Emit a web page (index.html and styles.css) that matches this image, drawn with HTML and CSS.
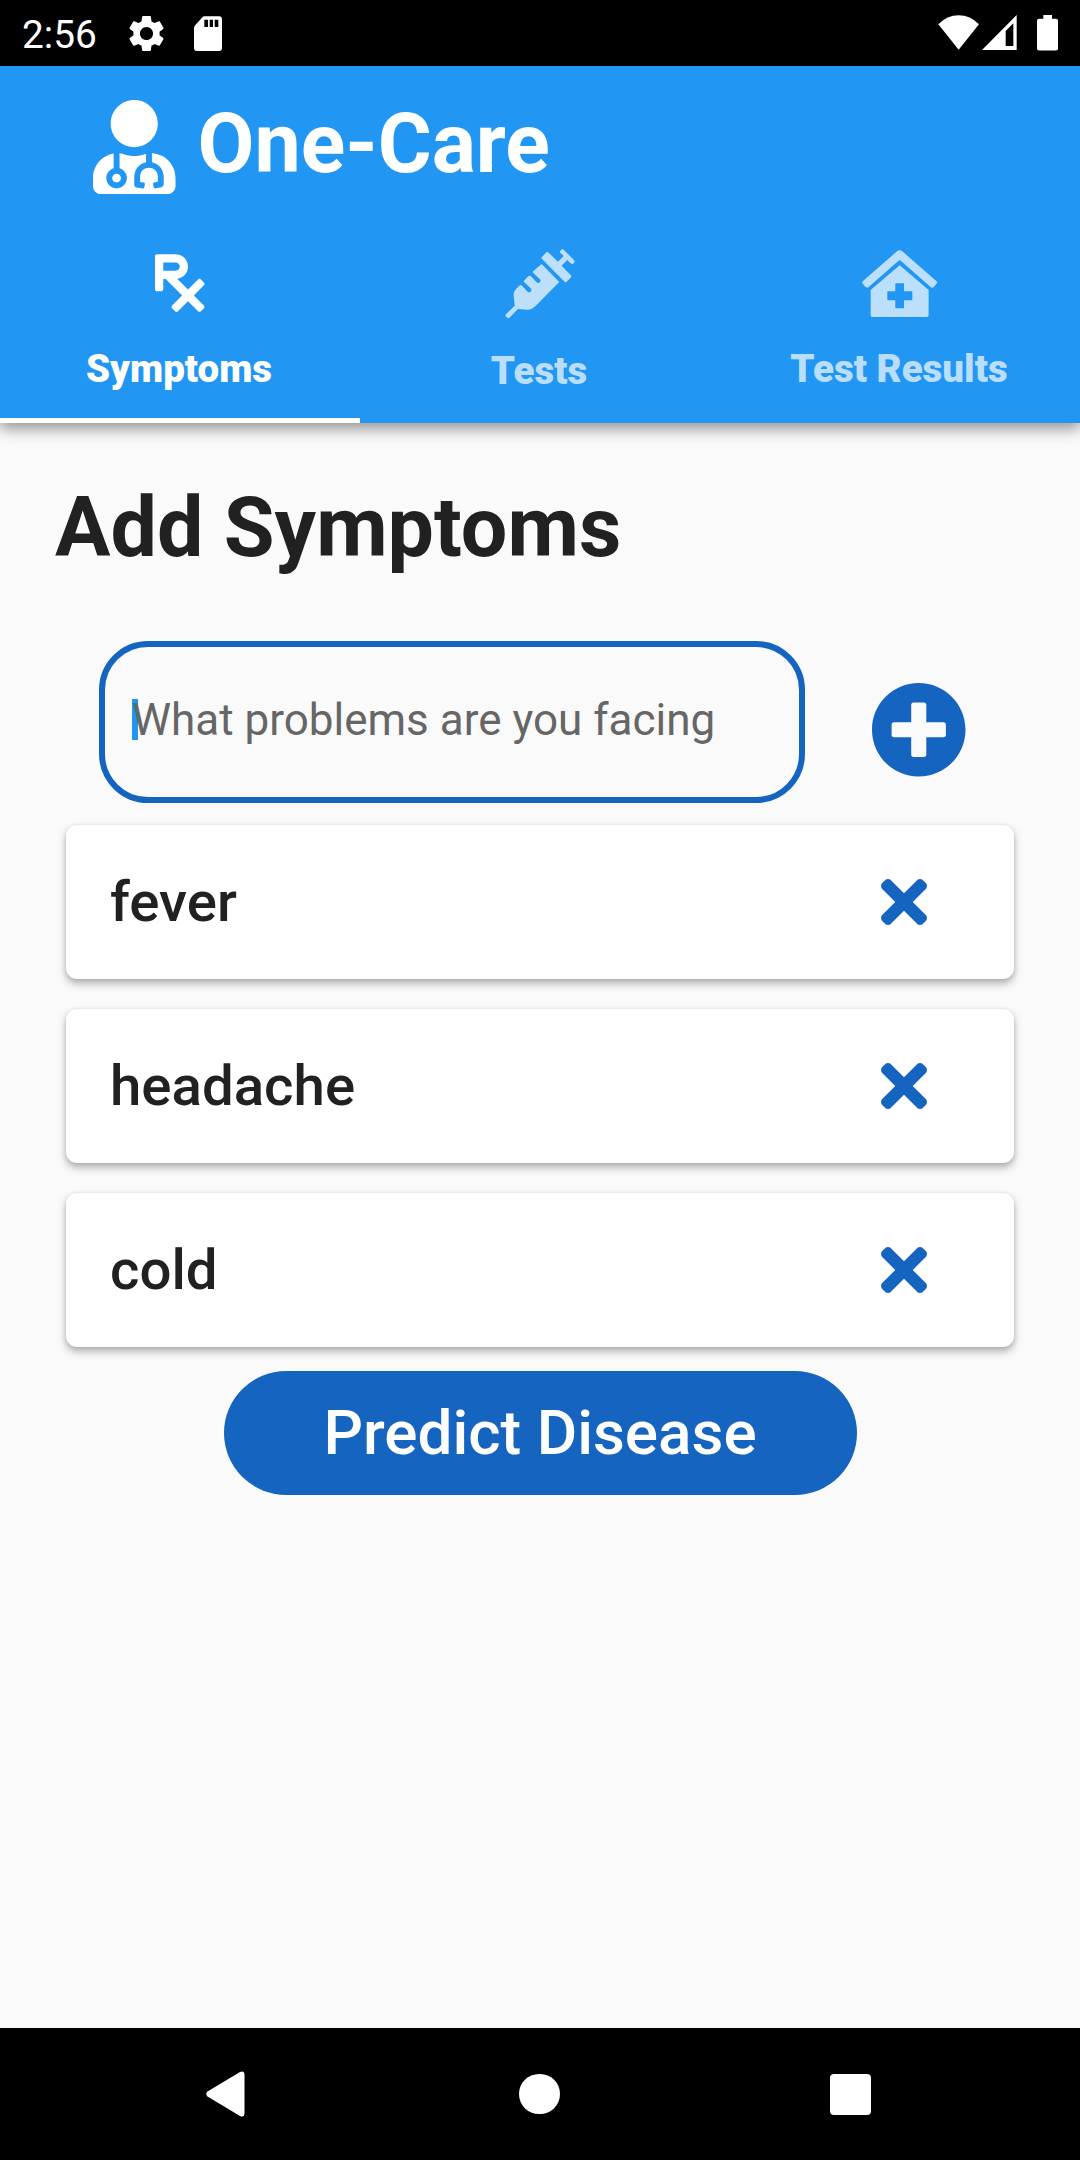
FILE: index.html
```html
<!DOCTYPE html>
<html lang="en">
<head>
<meta charset="utf-8">
<title>One-Care</title>
<link rel="stylesheet" href="styles.css">
</head>
<body>
<div class="status-bar">
  <span class="clock">2:56</span>
  <svg class="gear" viewBox="2.4 2.4 19.2 19.2"><path d="M19.14,12.94c0.04-0.3,0.06-0.61,0.06-0.94c0-0.32-0.02-0.64-0.07-0.94l2.03-1.58c0.18-0.14,0.23-0.41,0.12-0.61l-1.92-3.32c-0.12-0.22-0.37-0.29-0.59-0.22l-2.39,0.96c-0.5-0.38-1.03-0.7-1.62-0.94L14.4,2.81c-0.04-0.24-0.24-0.41-0.48-0.41h-3.84c-0.24,0-0.43,0.17-0.47,0.41L9.25,5.35C8.66,5.59,8.12,5.92,7.63,6.29L5.24,5.33c-0.22-0.08-0.47,0-0.59,0.22L2.74,8.87C2.62,9.08,2.66,9.34,2.86,9.48l2.03,1.58C4.84,11.36,4.8,11.69,4.8,12s0.02,0.64,0.07,0.94l-2.03,1.58c-0.18,0.14-0.23,0.41-0.12,0.61l1.92,3.32c0.12,0.22,0.37,0.29,0.59,0.22l2.39-0.96c0.5,0.38,1.03,0.7,1.62,0.94l0.36,2.54c0.05,0.24,0.24,0.41,0.48,0.41h3.84c0.24,0,0.44-0.17,0.47-0.41l0.36-2.54c0.59-0.24,1.13-0.56,1.62-0.94l2.39,0.96c0.22,0.08,0.47,0,0.59-0.22l1.92-3.32c0.12-0.22,0.07-0.47-0.12-0.61L19.14,12.94z M12,15.6c-1.98,0-3.6-1.62-3.6-3.6s1.62-3.6,3.6-3.6s3.6,1.62,3.6,3.6S13.98,15.6,12,15.6z"/></svg>
  <svg class="sd" viewBox="0 0 84 105"><path fill-rule="evenodd" d="M31 1H75Q84 1 84 10V96Q84 105 75 105H9Q0 105 0 96V37Q0 31 4 27L24 5Q28 1 31 1ZM31 11V33H42V11ZM47 11V33H57V11ZM62 11V33H73V11Z"/></svg>
  <svg class="wifi" viewBox="0 0 124 104"><path d="M1 28Q27 1 62 1T123 28L62 104Z"/></svg>
  <svg class="signal" viewBox="0 0 104 105"><path fill-rule="evenodd" d="M104 0V105H0ZM94 25L71 48V93H94Z"/></svg>
  <svg class="battery" viewBox="0 0 63 106"><path d="M19 0H45V11H57Q63 11 63 17V100Q63 106 57 106H6Q0 106 0 100V17Q0 11 6 11H19Z"/></svg>
</div>

<header class="app-bar">
  <div class="brand">
    <svg class="doctor" viewBox="0 0 448 512"><path d="M224 256c70.7 0 128-57.3 128-128S294.7 0 224 0 96 57.3 96 128s57.3 128 128 128zM104 424c0 13.3 10.7 24 24 24s24-10.7 24-24-10.7-24-24-24-24 10.7-24 24zm216-135.4v49c36.5 7.4 64 39.8 64 78.4v41.7c0 7.6-5.4 14.2-12.9 15.7l-32.2 6.4c-4.3.9-8.5-1.9-9.4-6.3l-3.1-15.7c-.9-4.3 1.9-8.6 6.3-9.4l19.3-3.9V416c0-62.8-96-65.1-96 1.9v26.7l19.3 3.9c4.3.9 7.1 5.1 6.3 9.4l-3.1 15.7c-.9 4.3-5.1 7.1-9.4 6.3l-31.2-4.2c-7.9-1.1-13.8-7.8-13.8-15.9V416c0-38.6 27.5-70.9 64-78.4v-45.2c-2.2.7-4.4 1.1-6.6 1.9-18 6.3-37.3 9.8-57.4 9.8s-39.4-3.5-57.4-9.8c-7.4-2.6-14.9-4.2-22.6-5.2v81.6c23.1 6.9 40 28.1 40 53.4 0 30.9-25.1 56-56 56s-56-25.1-56-56c0-25.3 16.9-46.5 40-53.4v-80.4C48.5 301 0 355.8 0 422.4v44.8C0 491.9 20.1 512 44.8 512h358.4c24.7 0 44.8-20.1 44.8-44.8v-44.8c0-72-56.8-130.3-128-133.8z"/></svg>
    <span class="brand-name">One-Care</span>
  </div>
  <nav class="tabs">
    <div class="tab tab-symptoms active">
      <svg class="tab-icon" viewBox="0 0 384 512"><path d="M301.26 352l78.06-78.06c6.25-6.25 6.25-16.38 0-22.63l-22.63-22.63c-6.25-6.25-16.38-6.25-22.63 0L256 306.74l-83.96-83.96C219.31 216.8 256 176.89 256 128c0-53.02-42.98-96-96-96H16C7.16 32 0 39.16 0 48v256c0 8.84 7.16 16 16 16h32c8.84 0 16-7.16 16-16v-80h18.75l128 128-78.06 78.06c-6.25 6.25-6.25 16.38 0 22.63l22.63 22.63c6.25 6.25 16.38 6.25 22.63 0L256 397.25l78.06 78.06c6.25 6.25 16.38 6.25 22.63 0l22.63-22.63c6.25-6.25 6.25-16.38 0-22.63L301.26 352zM64 96h96c17.64 0 32 14.36 32 32s-14.36 32-32 32H64V96z"/></svg>
      <span>Symptoms</span>
    </div>
    <div class="tab tab-tests">
      <svg class="tab-icon" viewBox="130 80 220 220"><path d="M246 131L299 185L227 258Q216 269 203 268L175 266L149 292Q146 295 143 292L138 288Q136 285 139 282L165 256L162 226Q161 214 169 206L179 196Q183 192 187 196L204 214Q208 218 213 214Q217 209 213 204L194 186Q191 183 194 180L206 168Q210 164 214 168L231 186Q236 190 241 186Q244 181 241 177L221 158Q218 155 221 152Z"/><path d="M260 96Q263 93 267 97L295 124L312 107L302 97Q299 94 302 91L305 88Q308 84 312 88L343 119Q347 123 343 127L340 130Q337 133 333 129L323 119L306 136L333 164Q337 168 333 172L321 184Q318 187 315 184L247 116Q244 113 247 110Z"/></svg>
      <span>Tests</span>
    </div>
    <div class="tab tab-results">
      <svg class="tab-icon" viewBox="308 86 226 210"><path d="M413 93Q421 87 429 93L531 182Q536 187 531 191L523 200Q519 205 514 200L425 122Q421 118 417 122L328 200Q323 205 319 200L311 191Q306 187 311 182Z"/><path fill-rule="evenodd" d="M421 135L508 209V285Q508 290 503 290H339Q334 290 334 285V209ZM408 189V213H384V240H408V264H434V240H459V213H434V189Z"/></svg>
      <span>Test Results</span>
    </div>
  </nav>
</header>

<main class="content">
  <h1 class="heading">Add Symptoms</h1>
  <div class="entry">
    <div class="field"><i class="caret"></i><span class="hint">What problems are you facing</span></div>
    <svg class="add" viewBox="8 8 496 496"><path d="M256 8C119 8 8 119 8 256s111 248 248 248 248-111 248-248S393 8 256 8zm144 276c0 6.6-5.4 12-12 12h-92v92c0 6.6-5.4 12-12 12h-56c-6.6 0-12-5.4-12-12v-92h-92c-6.6 0-12-5.4-12-12v-56c0-6.6 5.4-12 12-12h92v-92c0-6.6 5.4-12 12-12h56c6.6 0 12 5.4 12 12v92h92c6.6 0 12 5.4 12 12v56z"/></svg>
  </div>
  <div class="list">
    <div class="card"><span>fever</span><svg class="remove" viewBox="0 80 352 352"><path d="M242.72 256l100.07-100.07c12.28-12.28 12.28-32.19 0-44.48l-22.24-22.24c-12.28-12.28-32.19-12.28-44.48 0L176 189.28 75.93 89.21c-12.28-12.28-32.19-12.28-44.48 0L9.21 111.45c-12.28 12.28-12.28 32.19 0 44.48L109.28 256 9.21 356.07c-12.28 12.28-12.28 32.19 0 44.48l22.24 22.24c12.28 12.28 32.2 12.28 44.48 0L176 322.72l100.07 100.07c12.28 12.28 32.2 12.28 44.48 0l22.24-22.24c12.28-12.28 12.28-32.19 0-44.48L242.72 256z"/></svg></div>
    <div class="card"><span>headache</span><svg class="remove" viewBox="0 80 352 352"><path d="M242.72 256l100.07-100.07c12.28-12.28 12.28-32.19 0-44.48l-22.24-22.24c-12.28-12.28-32.19-12.28-44.48 0L176 189.28 75.93 89.21c-12.28-12.28-32.19-12.28-44.48 0L9.21 111.45c-12.28 12.28-12.28 32.19 0 44.48L109.28 256 9.21 356.07c-12.28 12.28-12.28 32.19 0 44.48l22.24 22.24c12.28 12.28 32.2 12.28 44.48 0L176 322.72l100.07 100.07c12.28 12.28 32.2 12.28 44.48 0l22.24-22.24c12.28-12.28 12.28-32.19 0-44.48L242.72 256z"/></svg></div>
    <div class="card"><span>cold</span><svg class="remove" viewBox="0 80 352 352"><path d="M242.72 256l100.07-100.07c12.28-12.28 12.28-32.19 0-44.48l-22.24-22.24c-12.28-12.28-32.19-12.28-44.48 0L176 189.28 75.93 89.21c-12.28-12.28-32.19-12.28-44.48 0L9.21 111.45c-12.28 12.28-12.28 32.19 0 44.48L109.28 256 9.21 356.07c-12.28 12.28-12.28 32.19 0 44.48l22.24 22.24c12.28 12.28 32.2 12.28 44.48 0L176 322.72l100.07 100.07c12.28 12.28 32.2 12.28 44.48 0l22.24-22.24c12.28-12.28 12.28-32.19 0-44.48L242.72 256z"/></svg></div>
  </div>
  <button class="predict">Predict Disease</button>
</main>

<div class="nav-bar">
  <svg class="back" viewBox="0 0 39 46"><path d="M1.500 20.500L34 1Q38.500-1 38.500 4V42Q38.500 47 34 45L1.500 25.500Q-1 23 1.500 20.500Z"/></svg>
  <div class="home"></div>
  <div class="recent"></div>
</div>
</body>
</html>
```
FILE: styles.css
```css
* { box-sizing: border-box; }

body {
  margin: 0;
  width: 1080px;
  height: 2160px;
  display: flex;
  flex-direction: column;
  background: #fafafa;
  color: #212121;
  font-family: Roboto, sans-serif;
  overflow: hidden;
}

svg { display: block; flex: none; fill: currentColor; }

/* System status bar */
.status-bar {
  flex: none;
  height: 66px;
  padding: 0 22px 0 22px;
  display: flex;
  align-items: flex-start;
  background: #000;
  color: #fff;
}
.clock { width: 106.500px; font-size: 38.800px; line-height: 70px; }
.gear { width: 35px; height: 35px; margin-top: 16px; }
.sd { width: 28px; height: 35px; margin: 16px 0 0 30px; }
.wifi { width: 41.300px; height: 34.700px; margin: 15px 0 0 auto; }
.signal { width: 34.700px; height: 35px; margin: 15px 0 0 3.300px; }
.battery { width: 21px; height: 35.500px; margin: 15px 0 0 20px; }

/* App bar */
.app-bar {
  flex: none;
  height: 357px;
  background: #2196f3;
  color: #fff;
  box-shadow: 0 6px 14px rgba(0, 0, 0, .28), 0 3px 16px rgba(0, 0, 0, .2);
}
.brand {
  height: 156px;
  padding-left: 93px;
  display: flex;
  align-items: center;
}
.doctor { width: 82.500px; height: 94.300px; margin: 6px 0 0; }
.brand-name { margin-left: 22px; font-size: 82.500px; font-weight: 700; line-height: 96px; }

.tabs { display: grid; grid-template-columns: repeat(3, 1fr); height: 201px; }
.tab {
  display: flex;
  flex-direction: column;
  align-items: center;
  color: rgba(255, 255, 255, .7);
  font-size: 38.500px;
  font-weight: 900;
  line-height: 44px;
}
.tab span { margin-right: 2px; }
.tab.active { color: #fff; border-bottom: 5px solid #fff; }
.tab-symptoms { padding-top: 28px; gap: 31px; }
.tab-symptoms .tab-icon { width: 49.500px; height: 66px; }
.tab-tests { padding-top: 24.700px; gap: 29px; }
.tab-tests .tab-icon { width: 73.300px; height: 73.300px; }
.tab-results { padding-top: 26.700px; gap: 28.300px; }
.tab-results .tab-icon { width: 75.300px; height: 70px; }

/* Symptom form */
.content {
  flex: 1;
  padding: 57px 66px 0;
  display: flex;
  flex-direction: column;
}
.heading { margin: 0 0 65px -11px; font-size: 82.500px; font-weight: 700; line-height: 96px; }

.entry { display: flex; align-items: flex-start; padding-left: 33px; }
.field {
  width: 706px;
  height: 162px;
  padding: 54px 0 0 27px;
  display: flex;
  align-items: flex-start;
  border: 6px solid #1565c0;
  border-radius: 49px;
}
.caret { width: 6px; height: 41px; margin: -2px -6px 0 0; background: #2196f3; }
.hint { font-size: 44px; line-height: 48px; margin-top: -5px; color: #666; white-space: nowrap; }
.add { width: 93.500px; height: 93.500px; margin: 42px 0 0 67.300px; color: #1565c0; }

.list { display: flex; flex-direction: column; gap: 30px; margin-top: 22px; }
.card {
  height: 154px;
  padding: 0 87.500px 0 44px;
  display: flex;
  align-items: center;
  justify-content: space-between;
  border-radius: 11px;
  background: #fff;
  box-shadow: 0 5px 8px rgba(0, 0, 0, .26), 0 1px 5px rgba(0, 0, 0, .13);
  font-size: 56.400px;
  font-weight: 500;
  line-height: 66px;
}
.remove { width: 46px; height: 46px; color: #1565c0; }

.predict {
  align-self: center;
  width: 633px;
  height: 124px;
  margin: 23.500px 0 0;
  padding: 0;
  border: 0;
  border-radius: 62px;
  background: #1565c0;
  color: #fff;
  font: 500 62px/124px Roboto, sans-serif;
}

/* System navigation bar */
.nav-bar {
  flex: none;
  height: 132px;
  padding: 0 209px 0 206px;
  display: flex;
  align-items: center;
  justify-content: space-between;
  background: #000;
  color: #fff;
}
.back { width: 39px; height: 46px; }
.home { width: 40.500px; height: 40.500px; margin-left: 4px; border-radius: 50%; background: #fff; }
.recent { width: 41px; height: 41px; border-radius: 4px; background: #fff; }
```
